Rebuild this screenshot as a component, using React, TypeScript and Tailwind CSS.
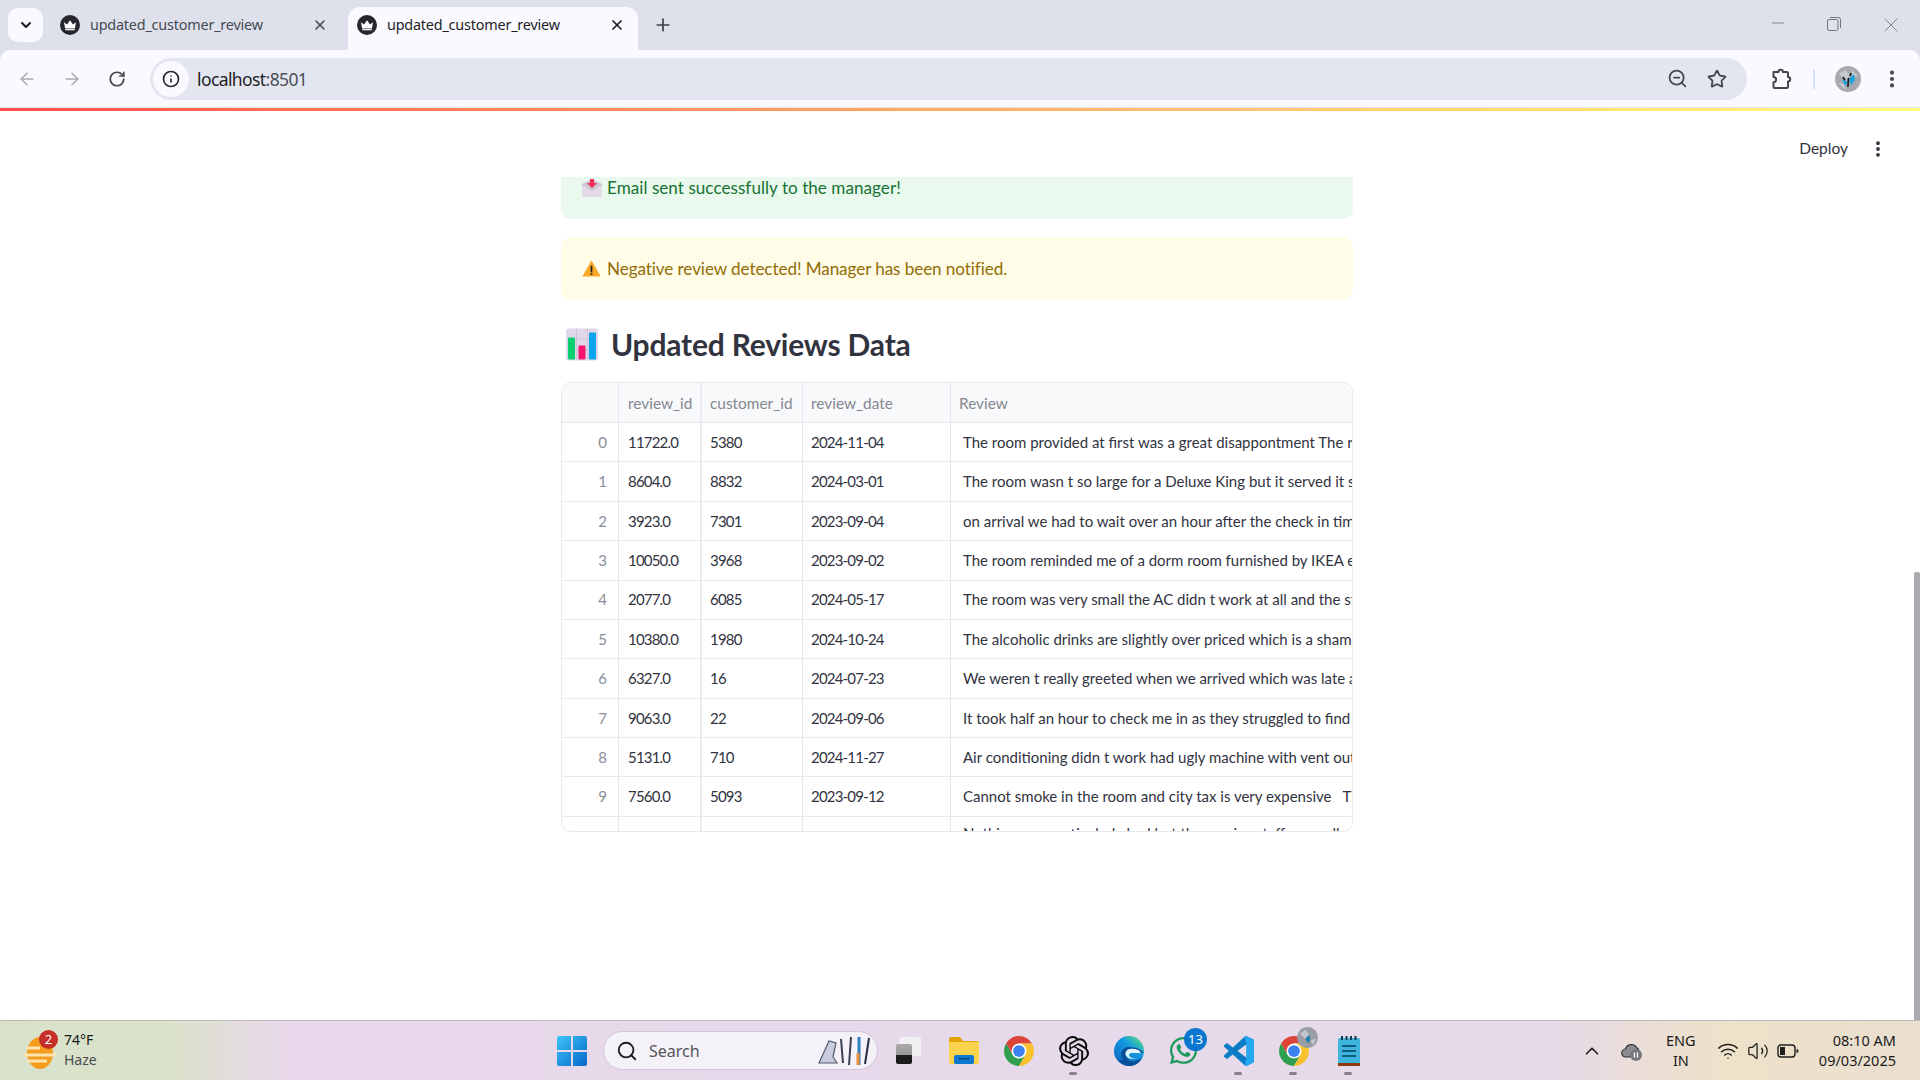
import { ArrowLeft, ArrowRight, RotateCw, Info, X, Plus, ChevronDown, ZoomOut, Star, EllipsisVertical, Minus, Search, ChevronUp, Wifi, Volume2 } from "lucide-react";
import { FaWhatsapp } from "react-icons/fa";
import { SiOpenai } from "react-icons/si";

const rows = [
  ["0", "11722.0", "5380", "2024-11-04", "The room provided at first was a great disappontment The room was not what we paid for"],
  ["1", "8604.0", "8832", "2024-03-01", "The room wasn t so large for a Deluxe King but it served it s purpose for the stay"],
  ["2", "3923.0", "7301", "2023-09-04", "on arrival we had to wait over an hour after the check in time for the room to be ready"],
  ["3", "10050.0", "3968", "2023-09-02", "The room reminded me of a dorm room furnished by IKEA everything was cheap and worn"],
  ["4", "2077.0", "6085", "2024-05-17", "The room was very small the AC didn t work at all and the staff were not able to help"],
  ["5", "10380.0", "1980", "2024-10-24", "The alcoholic drinks are slightly over priced which is a shame as the bar is lovely"],
  ["6", "6327.0", "16", "2024-07-23", "We weren t really greeted when we arrived which was late and the desk was empty"],
  ["7", "9063.0", "22", "2024-09-06", "It took half an hour to check me in as they struggled to find a room that was clean"],
  ["8", "5131.0", "710", "2024-11-27", "Air conditioning didn t work had ugly machine with vent out of the window and noise"],
  ["9", "7560.0", "5093", "2023-09-12", "Cannot smoke in the room and city tax is very expensive   The hotel is otherwise fine"],
];

function Crown() {
  return (
    <svg viewBox="0 0 20 20" className="w-[20px] h-[20px] shrink-0">
      <circle cx="10" cy="10" r="10" fill="#25262e" />
      <path d="M4 7.2l3 2.2L10 5.2l3 4.2 3-2.2-1.1 6.4H5.1z" fill="#fff" />
      <rect x="5.2" y="14.1" width="9.6" height="1.2" fill="#fff" />
    </svg>
  );
}

function Chrome() {
  return (
    <svg viewBox="0 0 24 24" className="w-[30px] h-[30px]">
      <path d="M22.39 6A12 12 0 0 0 1.61 6L6.8 15 12 12V6z" fill="#db4437" />
      <path d="M1.61 6A12 12 0 0 0 12 24l5.2-9L12 12l-5.2 3z" fill="#2f9e4f" />
      <path d="M12 24A12 12 0 0 0 22.39 6H12v6l5.2 3z" fill="#fbc02d" />
      <circle cx="12" cy="12" r="6" fill="#fff" />
      <circle cx="12" cy="12" r="4.7" fill="#3b82f0" />
    </svg>
  );
}

function Cell({ children }: { children: any }) {
  return <div className="w-[55px] h-full relative flex items-center justify-center">{children}</div>;
}

function Dot() {
  return <div className="absolute left-[23px] top-[51px] w-[8px] h-[3px] rounded-full bg-[#85808c]" />;
}

const gridCols = "grid grid-cols-[57px_83px_101px_148px_401px]";
const numeric = "tracking-[-0.8px]";

export default function App() {
  return (
    <div className="w-[1920px] h-[1080px] flex flex-col overflow-hidden bg-white [font-family:'Noto_Sans',sans-serif]">
      {/* tab strip */}
      <div className="h-[50px] shrink-0 bg-[#dee1ec] flex relative">
        <div className="ml-[8px] mt-[8px] w-[35px] h-[34px] rounded-[10px] bg-[#f9f9ff] flex items-center justify-center">
          <ChevronDown size={16} strokeWidth={3} color="#1f1f1f" />
        </div>
        <div className="ml-[17px] w-[279px] flex items-center pb-[1px]">
          <Crown />
          <span className="ml-[10px] w-[222px] text-[14.4px] text-[#474a52] tracking-[-0.2px] whitespace-nowrap">updated_customer_review</span>
          <X size={16} strokeWidth={2.4} color="#474a52" />
        </div>
        <div className="ml-[9px] mt-[7px] w-[290px] h-[43px] rounded-t-[12px] bg-[#f9f9ff] flex items-center pl-[9px] pb-[7px]">
          <Crown />
          <span className="ml-[10px] w-[222px] text-[14.4px] text-[#1f1f1f] tracking-[-0.2px] whitespace-nowrap">updated_customer_review</span>
          <X size={16} strokeWidth={2.6} color="#1f1f1f" />
        </div>
        <div className="ml-[15px] flex items-center pb-[1px]">
          <Plus size={20} strokeWidth={2} color="#3c3f46" />
        </div>
        <div className="ml-auto flex items-start">
          <div className="w-[56px] flex justify-center mt-[13px]"><Minus size={20} strokeWidth={1} color="#777" /></div>
          <svg viewBox="0 0 14 14" className="w-[14px] h-[14px] mt-[17px] mx-[21px]" fill="none" stroke="#777" strokeWidth="1">
            <rect x="0.5" y="2.5" width="10.5" height="11" rx="1.5" />
            <path d="M3 .5h8.5a2 2 0 0 1 2 2V11" />
          </svg>
          <div className="w-[58px] flex justify-center mt-[13px]"><X size={24} strokeWidth={0.9} color="#777" /></div>
        </div>
      </div>

      {/* toolbar */}
      <div className="h-[58px] shrink-0 bg-[#dee1ec]">
        <div className="h-[58px] rounded-t-[10px] bg-[#f9f9ff] flex items-center border-b-[1px] border-[#e6e6f0]">
          <div className="ml-[17px] w-[45px]"><ArrowLeft size={20} strokeWidth={1.8} color="#a9abb1" /></div>
          <div className="w-[45px]"><ArrowRight size={20} strokeWidth={1.8} color="#a9abb1" /></div>
          <div className="w-[43px] pl-[1px]"><RotateCw size={18} strokeWidth={2.3} color="#44474e" /></div>
          <div className="h-[42px] w-[1597px] rounded-full bg-[#e3e6f1] flex items-center pl-[3px]">
            <div className="w-[36px] h-[36px] rounded-full bg-[#f9f9ff] flex items-center justify-center">
              <Info size={18} strokeWidth={2.2} color="#26282c" />
            </div>
            <span className="ml-[8px] pt-[1px] text-[17.5px] tracking-[-0.6px] text-[#1f1f1f]">localhost<span className="text-[#4c4f56]">:8501</span></span>
            <div className="ml-auto"><ZoomOut size={21} strokeWidth={2} color="#44474e" /></div>
            <div className="ml-[19px] mr-[20px]"><Star size={20} strokeWidth={2.2} color="#44474e" /></div>
          </div>
          <svg viewBox="0 0 24 24" className="ml-[22px] w-[24px] h-[24px]" fill="none" stroke="#44474e" strokeWidth="2" strokeLinejoin="round">
            <path d="M4.5 5h5a2.2 2.2 0 0 1 4.4 0H18a1 1 0 0 1 1 1v4a2.2 2.2 0 0 1 0 4.4V20a1 1 0 0 1-1 1H5.5a1 1 0 0 1-1-1v-4.8a2.6 2.6 0 0 0 0-5.2z" />
          </svg>
          <div className="ml-[20px] w-[2px] h-[20px] bg-[#d3e3fd]" />
          <svg viewBox="0 0 26 26" className="ml-[20px] w-[26px] h-[26px]">
            <circle cx="13" cy="13" r="13" fill="#a7a9b0" />
            <path d="M4 8l6-4 5 5-4 5zM16 3l7 7-5 1zM3 17l6 1 2 6z" fill="#c9cbd1" />
            <path d="M14 13l5-5 1 6-4 5zM13 16l-6-3 3 7z" fill="#1aa5dc" />
            <path d="M13.5 12l-.6 9M10 14l-2-3M15 10l1-3" stroke="#17181b" strokeWidth="1.6" />
          </svg>
          <div className="ml-[20px]"><EllipsisVertical size={22} strokeWidth={2.6} color="#44474e" /></div>
        </div>
      </div>

      {/* decoration line */}
      <div className="h-[3px] shrink-0 bg-gradient-to-r from-[#ff4b4b] to-[#fffd80]" />

      {/* page */}
      <div className="flex-1 min-h-0 flex">
        <div className="flex-1 min-w-0 flex flex-col">
          <div className="h-[66px] shrink-0 flex items-center justify-end pt-[10px]">
            <span className="[font-family:Lato,sans-serif] text-[15.5px] text-[#31333f] mr-[20px]">Deploy</span>
            <div className="mr-[26px]"><EllipsisVertical size={20} strokeWidth={2.6} color="#31333f" /></div>
          </div>
          <div className="flex-1 min-h-0 overflow-hidden">
            <div className="w-[792px] mx-auto -mt-[21px] [font-family:Lato,sans-serif]">
              <div className="h-[63px] rounded-[10px] bg-[#e9f9ee] flex items-center pl-[21px] text-[#177233] text-[17.1px]">
                <svg viewBox="0 0 20 18" className="w-[20px] h-[18px] mr-[5px] mt-[1px]">
                  <path d="M0 5l10-5 10 5v12a1 1 0 0 1-1 1H1a1 1 0 0 1-1-1z" fill="#cfc4d4" />
                  <path d="M0 6l10 6 10-6v11a1 1 0 0 1-1 1H1a1 1 0 0 1-1-1z" fill="#e4dbe8" />
                  <path d="M8 0h4v4h3l-5 5-5-5h3z" fill="#ef2d56" />
                </svg>
                <span className="tracking-[0.03px]">Email sent successfully to the manager!</span>
              </div>
              <div className="h-[63px] mt-[18px] rounded-[10px] bg-[#fffce7] flex items-center pl-[21px] text-[#926c05] text-[17.1px]">
                <svg viewBox="0 0 20 18" className="w-[19px] h-[17px] mr-[6px]">
                  <path d="M10 0.5L19.7 17.5H.3z" fill="#f9a825" />
                  <rect x="9.1" y="6" width="1.8" height="7" fill="#222" />
                  <rect x="9.1" y="14" width="1.8" height="1.8" fill="#222" />
                </svg>
                <span className="tracking-[-0.08px]">Negative review detected! Manager has been notified.</span>
              </div>
              <div className="h-[82px] flex items-center pl-[5px] pt-[7px]">
                <svg viewBox="0 0 32 32" className="w-[32px] h-[33px] mr-[13px]">
                  <rect width="32" height="32" rx="3" fill="#e0d8ea" />
                  <path d="M10.5 0v32M21.5 0v32M0 10.5h32M0 21.5h32" stroke="#c9bfd6" strokeWidth="0.8" />
                  <rect x="2" y="9" width="7" height="22" rx="1" fill="#0ad06f" />
                  <rect x="12.5" y="17" width="7" height="14" rx="1" fill="#f5146f" />
                  <rect x="23" y="4" width="7" height="27" rx="1" fill="#0aa5ec" />
                </svg>
                <span className="text-[30px] font-bold text-[#31333f] tracking-[-0.2px]">Updated Reviews Data</span>
              </div>
              <div className="h-[450px] rounded-[10px] border border-[#e8e9ee] overflow-hidden text-[15px] text-[#31333f]">
                <div className={`${gridCols} h-[40px] bg-[#f8f9fb] text-[#85878f] text-[15.4px] border-b border-[#e6e7ec]`}>
                  <div className="border-r border-[#e6e7ec]" />
                  <div className="border-r-2 border-[#eaebef] pl-[9px] pt-[2px] flex items-center">review_id</div>
                  <div className="border-r border-[#e6e7ec] pl-[8px] pt-[2px] flex items-center">customer_id</div>
                  <div className="border-r border-[#e6e7ec] pl-[8px] pt-[2px] flex items-center">review_date</div>
                  <div className="pl-[8px] pt-[2px] flex items-center">Review</div>
                </div>
                {rows.map((r) => (
                  <div key={r[0]} className={`${gridCols} h-[39.375px] border-b border-[#e9eaee]`}>
                    <div className="border-r border-[#e6e7ec] pr-[11px] flex items-center justify-end text-[#8b8e96]">{r[0]}</div>
                    <div className={`border-r-2 border-[#eaebef] pl-[9px] flex items-center ${numeric}`}>{r[1]}</div>
                    <div className={`border-r border-[#e6e7ec] pl-[8px] flex items-center ${numeric}`}>{r[2]}</div>
                    <div className={`border-r border-[#e6e7ec] pl-[8px] flex items-center ${numeric}`}>{r[3]}</div>
                    <div className="pl-[12px] flex items-center whitespace-pre overflow-hidden">{r[4]}</div>
                  </div>
                ))}
                <div className={`${gridCols} h-[39.375px]`}>
                  <div className="border-r border-[#e6e7ec]" />
                  <div className="border-r-2 border-[#eaebef]" />
                  <div className="border-r border-[#e6e7ec]" />
                  <div className="border-r border-[#e6e7ec]" />
                  <div className="pl-[12px] pb-[7px] flex items-center whitespace-pre overflow-hidden">Nothing was particularly bad but the service staff were all</div>
                </div>
              </div>
            </div>
          </div>
        </div>
        <div className="w-[6px] shrink-0 flex flex-col">
          <div className="h-[461px]" />
          <div className="flex-1 bg-[#acabb0] rounded-t-[2px]" />
        </div>
      </div>

      {/* taskbar */}
      <div className="h-[60px] shrink-0 border-t border-[#bdb9bb] flex items-center bg-[linear-gradient(90deg,#d8e2ca_0%,#dbe2cb_9%,#e8d7ea_15%,#e6d9ea_50%,#e6d9ea_80%,#eee2c9_90%,#eadfd0_100%)] [font-family:'Noto_Sans',sans-serif]">
        <div className="w-[557px] shrink-0 h-full flex items-center pl-[24px]">
          <div className="relative w-[32px] h-[40px] mr-[8px]">
            <svg viewBox="0 0 32 40" className="w-[32px] h-[40px]">
              <ellipse cx="16" cy="22" rx="13" ry="16" fill="#f39c1f" />
              <path d="M2 17h14M0 24h32M3 30h20" stroke="#fde3b0" strokeWidth="3" />
            </svg>
            <div className="absolute left-[15px] -top-[1px] w-[19px] h-[19px] rounded-full bg-[#c62f27] text-white text-[13px] leading-[19px] text-center">2</div>
          </div>
          <div className="leading-[20px] text-[14px] text-[#1a1a1a] -mt-[1px]">
            <div>74°F</div>
            <div className="text-[#4a4a50]">Haze</div>
          </div>
        </div>
        <svg viewBox="0 0 30 30" className="w-[30px] h-[30px] shrink-0">
          <defs>
            <linearGradient id="win" x1="0" y1="0" x2="1" y2="1">
              <stop offset="0" stopColor="#3cc6f6" />
              <stop offset="1" stopColor="#0666c9" />
            </linearGradient>
          </defs>
          <path d="M0 2a2 2 0 0 1 2-2h12v14H0zM16 0h12a2 2 0 0 1 2 2v12H16zM0 16h14v14H2a2 2 0 0 1-2-2zM16 16h14v12a2 2 0 0 1-2 2H16z" fill="url(#win)" />
        </svg>
        <div className="ml-[16px] w-[275px] h-[39px] shrink-0 rounded-full bg-[#f5f1f9] border border-[#cfc6d8] flex items-center pl-[12px]">
          <Search size={22} strokeWidth={2} color="#1f1f1f" />
          <span className="ml-[11px] text-[16px] text-[#55555c]">Search</span>
          <svg viewBox="0 0 56 32" className="ml-auto mr-[4px] w-[56px] h-[32px]" fill="none">
            <path d="M2 28L12 6l7 2-3 14 4 6z" fill="#c8ccdc" stroke="#555a70" strokeWidth="1.2" />
            <path d="M24 4l2 24M34 2l-2 28" stroke="#3a3f50" strokeWidth="2" />
            <path d="M42 2v28" stroke="#2f7fc1" strokeWidth="3" />
            <path d="M41 18v12" stroke="#e8913a" strokeWidth="3" />
            <path d="M52 3l-4 26" stroke="#283048" strokeWidth="2" />
          </svg>
        </div>
        <div className="ml-[3px] flex h-full shrink-0">
          <Cell>
            <div className="w-[25px] h-[27px] relative">
              <div className="absolute right-0 top-0 w-[22px] h-[19px] bg-[#f2eff3] rounded-[2px]" />
              <div className="absolute left-0 bottom-0 w-[16px] h-[20px] bg-[linear-gradient(180deg,#aaa_0%,#999_55%,#1c1c1c_56%)] rounded-[2px]" />
            </div>
          </Cell>
          <Cell>
            <svg viewBox="0 0 30 27" className="w-[30px] h-[27px]">
              <path d="M0 2a2 2 0 0 1 2-2h9l3 4h14a2 2 0 0 1 2 2v4H0z" fill="#e0a409" />
              <path d="M0 5h30v20a2 2 0 0 1-2 2H2a2 2 0 0 1-2-2z" fill="#fbd34d" />
              <rect x="5" y="18" width="20" height="9" rx="2" fill="#0c78cf" />
              <rect x="10" y="21" width="10" height="1.6" fill="#0a4f8e" />
            </svg>
          </Cell>
          <Cell><Chrome /></Cell>
          <Cell>
            <SiOpenai size={30} color="#0c0c0c" />
            <Dot />
          </Cell>
          <Cell>
            <svg viewBox="0 0 24 24" className="w-[30px] h-[30px]">
              <defs>
                <linearGradient id="edgea" x1="0.9" y1="0.1" x2="0.2" y2="0.9">
                  <stop offset="0" stopColor="#52d68b" />
                  <stop offset="0.4" stopColor="#129ae0" />
                  <stop offset="1" stopColor="#0c6fc4" />
                </linearGradient>
              </defs>
              <circle cx="12" cy="12" r="12" fill="url(#edgea)" />
              <path d="M24 13.5H12c-1.6 0-2.6 1.2-2.2 2.8.6 2.4 3.4 3.9 6.4 3.6 2.4-.2 4.6-1.4 6.2-3.2-1.4 4.4-5.6 7.3-10.4 7.3-4 0-7.6-2.6-9-6 1.4 1 3 1.5 4.6 1.2-1.6-1.6-2.4-3.8-1.8-6 .8-3 3.6-4.6 6.6-4.4 4.6.2 8 1 11.6 4.7z" fill="#0a4f9a" />
              <path d="M21.5 13.5H14c-1.6 0-2.3 1.3-1.6 2.6.8 1.4 3.8 2.2 6.4 1.2-1.8 1-4.8 1.4-7.2.2-2-1-3-3-2.2-4.8.8-1.8 3-2.7 5.5-2.5 3 .2 5.7 1 6.6 3.3z" fill="#dff4fb" />
            </svg>
          </Cell>
          <Cell>
            <FaWhatsapp size={31} color="#1d9a5b" />
            <div className="absolute left-[28px] top-[7px] w-[23px] h-[23px] rounded-full bg-[#0b77d0] text-white text-[13px] leading-[23px] text-center">13</div>
          </Cell>
          <Cell>
            <svg viewBox="0 0 24 24" className="w-[30px] h-[30px]">
              <path d="M23.15 2.587L18.21.21a1.494 1.494 0 0 0-1.705.29l-9.46 8.63-4.12-3.128a.999.999 0 0 0-1.276.057L.327 7.261A1 1 0 0 0 .326 8.74L3.899 12 .326 15.26a1 1 0 0 0 .001 1.479L1.65 17.94a.999.999 0 0 0 1.276.057l4.12-3.128 9.46 8.63a1.492 1.492 0 0 0 1.704.29l4.942-2.377A1.5 1.5 0 0 0 24 20.06V3.939a1.5 1.5 0 0 0-.85-1.352zm-5.146 14.861L10.826 12l7.178-5.448v10.896z" fill="#0c7cc6" />
              <path d="M18.21.21l4.94 2.377A1.5 1.5 0 0 1 24 3.94v16.12a1.5 1.5 0 0 1-.85 1.352L18.21 23.79a1.49 1.49 0 0 1-1.7-.29L18 17.45V6.55L16.5.5a1.49 1.49 0 0 1 1.71-.29z" fill="#24a9f1" />
            </svg>
            <Dot />
          </Cell>
          <Cell>
            <Chrome />
            <svg viewBox="0 0 22 22" className="absolute left-[31px] top-[6px] w-[21px] h-[21px]">
              <circle cx="11" cy="11" r="11" fill="#9a9ca4" />
              <path d="M3 7l6-4 4 5-5 4zM14 14l6-2-3 7z" fill="#c2c4cb" />
              <path d="M9 12l4-4 1 6-3 3z" fill="#1b7fb0" />
            </svg>
            <Dot />
          </Cell>
          <Cell>
            <svg viewBox="0 0 22 30" className="w-[22px] h-[30px]">
              <rect y="2" width="22" height="26" rx="1.5" fill="#3fb4dc" />
              <rect y="27" width="22" height="3" fill="#8b3a12" />
              <path d="M4 0v4M8.5 0v4M13 0v4M17.5 0v4" stroke="#0d3b50" strokeWidth="2" />
              <path d="M4 10h14M4 15h14M4 20h14" stroke="#0d5d80" strokeWidth="2" />
            </svg>
            <Dot />
          </Cell>
        </div>
        <div className="ml-auto flex items-center h-full text-[#1a1a1a]">
          <ChevronUp size={22} strokeWidth={1.8} color="#1f1f1f" />
          <svg viewBox="0 0 22 20" className="ml-[18px] w-[22px] h-[20px]">
            <path d="M5 16a4 4 0 0 1-.5-8 6 6 0 0 1 11-1.5A4.5 4.5 0 0 1 18 10v6z" fill="#8a8c92" stroke="#333" strokeWidth="1.2" />
            <circle cx="15" cy="14" r="6" fill="#77787e" />
            <path d="M13.4 11.5v5M16.4 11.5v5" stroke="#fff" strokeWidth="1.3" />
          </svg>
          <div className="ml-[16px] w-[44px] text-center text-[14.5px] leading-[20px] -mt-[1px]">
            <div>ENG</div>
            <div>IN</div>
          </div>
          <div className="ml-[14px]"><Wifi size={22} strokeWidth={1.7} color="#1f1f1f" /></div>
          <div className="ml-[8px]"><Volume2 size={22} strokeWidth={1.4} color="#1f1f1f" /></div>
          <svg viewBox="0 0 22 14" className="ml-[8px] w-[22px] h-[14px]" fill="none">
            <rect x="1" y="1" width="17" height="12" rx="3" stroke="#1f1f1f" strokeWidth="1.4" />
            <rect x="3" y="3" width="5" height="8" fill="#1f1f1f" />
            <path d="M19.5 5v4a2 2 0 0 0 0-4z" fill="#1f1f1f" />
          </svg>
          <div className="ml-[20px] mr-[24px] text-right text-[14.5px] leading-[20px] -mt-[1px]">
            <div>08:10 AM</div>
            <div>09/03/2025</div>
          </div>
        </div>
      </div>
    </div>
  );
}
